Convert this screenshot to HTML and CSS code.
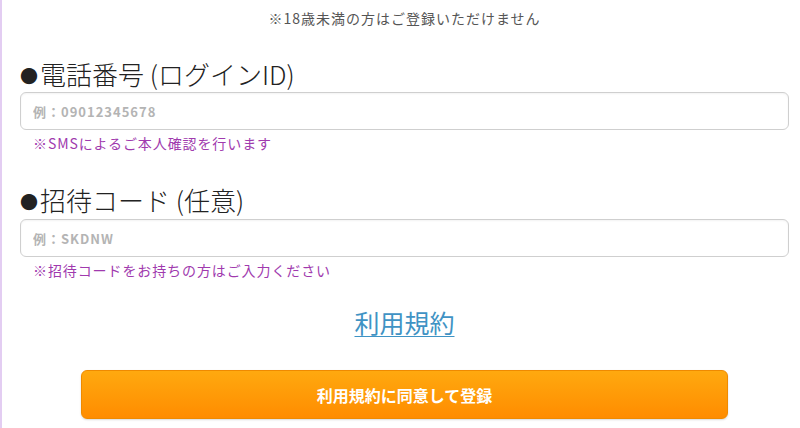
FILE: index.html
```html
<!DOCTYPE html>
<html lang="ja">
<head>
  <meta charset="UTF-8" />
  <meta name="viewport" content="width=device-width, initial-scale=1" />
  <title>会員登録</title>
  <link rel="stylesheet" href="styles.css">
</head>
<body>

<div class="page">
  <p class="notice">※18歳未満の方はご登録いただけません</p>

  <div class="field">
    <label class="field-title" for="tel"><span class="dot">●</span>電話番号 (ログインID)</label>
    <input class="text-input" id="tel" type="tel" placeholder="例：09012345678" />
    <p class="hint">※SMSによるご本人確認を行います</p>
  </div>

  <div class="field">
    <label class="field-title" for="invite"><span class="dot">●</span>招待コード (任意)</label>
    <input class="text-input" id="invite" type="text" placeholder="例：SKDNW" />
    <p class="hint">※招待コードをお持ちの方はご入力ください</p>
  </div>

  <p class="terms"><a href="#">利用規約</a></p>

  <button class="submit" type="button">利用規約に同意して登録</button>
</div>

</body>
</html>
```

FILE: styles.css
```css
body {
  margin: 0;
  font-family: "Noto Sans CJK JP", "Noto Sans", sans-serif;
  background: #fff;
  color: #333;
}
.page {
  border-left: 2px solid #e3cdf2;
  padding: 8px 11px 20px 18px;
  min-height: 428px;
  box-sizing: border-box;
}
.notice {
  margin: 0;
  text-align: center;
  font-size: 14px;
  line-height: 20px;
  letter-spacing: 1px;
  color: #555;
}
.field {
  margin-top: 32px;
}
.field + .field {
  margin-top: 33px;
}
.field-title {
  display: block;
  font-size: 26px;
  line-height: 28px;
  padding-bottom: 4px;
  font-weight: 300;
  color: #222;
}
.dot {
  font-size: 18px;
  line-height: 0;
  vertical-align: 2px;
  margin-right: 2px;
}
.text-input {
  display: block;
  width: 100%;
  height: 38px;
  box-sizing: border-box;
  border: 1px solid #cfcfcf;
  border-radius: 6px;
  padding: 0 12px;
  font-family: inherit;
  font-size: 13px;
  font-weight: bold;
  letter-spacing: 1px;
  color: #333;
  box-shadow: inset 0 1px 2px rgba(0,0,0,0.05);
}
.field + .field .text-input {
  margin-top: 1px;
}
.text-input::placeholder {
  color: #b4b4b4;
}
.hint {
  margin: 3px 0 0;
  padding-left: 13px;
  font-size: 14px;
  line-height: 20px;
  letter-spacing: 0.9px;
  color: #a03aae;
}
.terms {
  margin: 26px 0 0;
  text-align: center;
  font-size: 25px;
  line-height: 32px;
}
.terms a {
  color: #3f93c4;
  text-decoration: underline;
  text-underline-offset: 3px;
  text-decoration-thickness: 1px;
}
.submit {
  display: block;
  width: 647px;
  height: 49px;
  margin: 32px auto 0;
  border: 1px solid #ef8a00;
  border-radius: 6px;
  background: linear-gradient(180deg, #ffa90f, #ff8c00);
  color: #fff;
  font-family: inherit;
  font-size: 16px;
  font-weight: bold;
  cursor: pointer;
  box-shadow: 0 1px 2px rgba(0,0,0,0.15);
}
```
